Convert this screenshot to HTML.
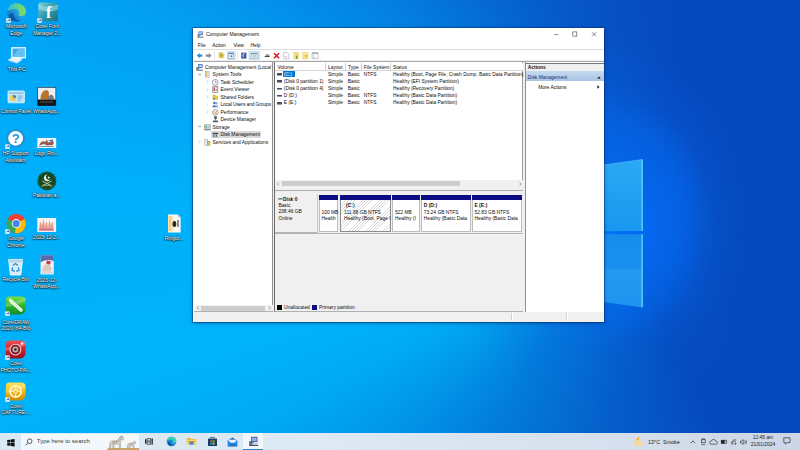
<!DOCTYPE html>
<html><head><meta charset="utf-8"><title>Computer Management</title>
<style>
*{margin:0;padding:0;box-sizing:border-box}
html,body{width:800px;height:450px;overflow:hidden;background:#0566d2}
body{position:relative;font-family:"Liberation Sans",sans-serif;color:#000}
.a,.t,.d,svg{position:absolute}
.t{white-space:nowrap;font-size:4.9px;line-height:7px;height:7px;color:#0c0c0c}
.b{font-weight:bold}
.d{white-space:nowrap;font-size:5px;line-height:7.6px;color:#fff;text-align:center;width:40px;text-shadow:0 0 .8px #000,0 .5px 1.2px rgba(0,0,0,.95),0 0 2px rgba(0,0,0,.65)}
#bg{left:0;top:0;width:800px;height:450px;
 background:conic-gradient(from 0deg at 620px 235px,#064fc2 0deg,#0648be 19deg,#0549bd 90deg,#054bbe 155deg,#0560cb 185deg,#027edc 215deg,#0196e9 230deg,#00a9f3 242deg,#00b3fa 254deg,#00b0fa 274deg,#02a1f4 294deg,#028ce8 306deg,#0479dc 319deg,#0566d2 332deg,#0659c9 346deg,#064fc2 360deg)}
#glow{left:0;top:0;width:800px;height:450px;
 background:radial-gradient(ellipse 90px 120px at 630px 225px,rgba(3,110,255,.8) 0,rgba(3,108,250,.5) 35%,rgba(4,104,240,0) 100%),radial-gradient(ellipse 170px 210px at 600px 215px,rgba(5,104,232,.8) 0,rgba(5,104,232,.6) 47%,rgba(5,100,226,.25) 63%,rgba(6,94,216,.06) 85%,rgba(6,88,205,0) 100%)}
</style></head><body>
<div id="bg" class="a"></div><div id="glow" class="a"></div>

<svg style="left:600px;top:150px" width="60" height="170" viewBox="600 150 60 170">
<defs><linearGradient id="lg1" x1="0" x2="0" y1="0" y2="1"><stop offset="0" stop-color="#2ba9f5"/><stop offset="1" stop-color="#1797ee"/></linearGradient>
<linearGradient id="lg2" x1="0" x2="0" y1="0" y2="1"><stop offset="0" stop-color="#168cec"/><stop offset=".45" stop-color="#1a90ee"/><stop offset=".5" stop-color="#249af1"/><stop offset="1" stop-color="#1f94ef"/></linearGradient></defs>
<polygon points="600,165.600 642.600,159.400 642.600,231 600,231.200" fill="url(#lg1)"/>
<polygon points="600,234 642.600,234.200 642.600,307.400 600,301.600" fill="url(#lg2)"/>
<path d="M600 165.600L642.200 159.500" stroke="#5cc6f8" stroke-width=".7" fill="none" opacity=".8"/>
<path d="M642.100 159.600V231M642.100 234.200V307.200" stroke="#66d2fa" stroke-width="1.300" fill="none"/>
</svg>
<div class="a" style="left:193.30px;top:27.90px;width:410.70px;height:293.90px;background:#fff;box-shadow:0 0 0 .7px rgba(10,50,120,.7),0 1px 4px rgba(0,20,70,.45)"></div>
<div class="t" style="left:205.90px;top:30.70px;font-size:5.05px;color:#111">Computer Management</div>
<svg style="left:197px;top:30.6px" width="7" height="7" viewBox="0 0 14 14"><rect x="3" y="1" width="9" height="7" fill="#3d5fa8"/><rect x="4" y="2" width="7" height="5" fill="#9fc4ee"/><rect x="1" y="7" width="6" height="5" fill="#6f7f96"/><rect x="5" y="9" width="8" height="3" fill="#c9ced6"/><rect x="1" y="12" width="12" height="1.2" fill="#55606e"/></svg>
<svg style="left:550px;top:29px" width="52" height="11" viewBox="550 29 52 11" fill="none" stroke="#333" stroke-width=".55"><path d="M554.2 34.6h4.2"/><rect x="572.8" y="31.9" width="4" height="4.2"/><path d="M592 32.2l4.2 4.2M596.2 32.2l-4.2 4.2"/></svg>
<div class="t" style="left:197.80px;top:41.50px;">File</div>
<div class="t" style="left:212.20px;top:41.50px;">Action</div>
<div class="t" style="left:233.40px;top:41.50px;">View</div>
<div class="t" style="left:250.40px;top:41.50px;">Help</div>
<div class="a" style="left:194.00px;top:49.00px;width:409.50px;height:0.60px;background:#dcdcdc"></div>
<div class="a" style="left:194.00px;top:60.20px;width:409.50px;height:1.00px;background:#f0f0f0"></div>
<div class="a" style="left:194.00px;top:61.20px;width:409.50px;height:0.80px;background:#a6a6a6"></div>
<svg style="left:193px;top:49.6px" width="135" height="11" viewBox="193 49.6 135 11"><path d="M196.8 55.2l2.9-2.7v1.6h2.6v2.2h-2.6v1.6z" fill="#2f8ddb"/><path d="M211.6 55.2l-2.9-2.7v1.6h-2.9v2.2h2.9v1.6z" fill="#8d8d8d"/><rect x="214.3" y="51.2" width=".5" height="8" fill="#c4c4c4"/><rect x="218.6" y="52.6" width="5.6" height="5.2" fill="#e9cf62"/><rect x="219.2" y="51.8" width="3" height="1.4" fill="#d9b94a"/><path d="M221.4 56.8v-2.6l-1 1M221.4 54.2l1 1" stroke="#5a7a2a" stroke-width=".6" fill="none"/><rect x="227.2" y="51" width="7.9" height="8.4" fill="#cfe5f8" stroke="#9cc7ec" stroke-width=".4"/><rect x="228.8" y="52.6" width="4.8" height="5.2" fill="#fff" stroke="#6b7f99" stroke-width=".5"/><rect x="228.8" y="52.6" width="4.8" height="1.2" fill="#6b7f99"/><rect x="230.6" y="55" width="1.6" height="1.6" fill="#2a62c6"/><rect x="237.6" y="51.2" width=".5" height="8" fill="#c4c4c4"/><rect x="241.2" y="52.2" width="5.2" height="6" fill="#3859a8"/><path d="M244.6 53.4h-1.4v1.6h-.8M243.2 55v2.2" stroke="#fff" stroke-width=".7" fill="none"/><rect x="249" y="51" width="10.4" height="8.4" fill="#cfe5f8" stroke="#9cc7ec" stroke-width=".4"/><rect x="251.2" y="52.8" width="6" height="4.8" fill="#fff" stroke="#6b8a99" stroke-width=".5"/><rect x="251.2" y="52.8" width="6" height="1.1" fill="#6b8a99"/><rect x="253.4" y="55" width="2.2" height="1.2" fill="#4f9a8a"/><path d="M264.2 56.4l1.6-1.4h3.8v1.6h-3.4z" fill="#444"/><rect x="266" y="54" width="3" height=".8" fill="#777"/><path d="M274 52.8l5.2 5M279.2 52.8l-5.2 5" stroke="#d2151f" stroke-width="1.5" fill="none"/><path d="M283.6 52h3.6l1.6 1.6v5h-5.2z" fill="#fff" stroke="#8f9aae" stroke-width=".5"/><rect x="284.6" y="55.6" width="2.6" height="1.6" fill="#f1c8cf"/><rect x="293.8" y="52" width="4.8" height="6.6" fill="#f2df7a" stroke="#d8c24f" stroke-width=".3"/><rect x="296" y="55.2" width="1.2" height="3" fill="#6a8f2c"/><rect x="302.6" y="52" width="5.6" height="6.6" fill="#f4e691" stroke="#d8c24f" stroke-width=".3"/><rect x="304.6" y="54.6" width="2.6" height="2.8" fill="#efd25c"/><rect x="305" y="55.2" width="2" height=".5" fill="#a58a2a"/><rect x="312" y="52.4" width="6" height="5.6" fill="#fff" stroke="#7b8794" stroke-width=".5"/><rect x="312" y="52.4" width="6" height="1.1" fill="#9aa6b3"/><rect x="312.8" y="54.4" width="1.6" height="2.8" fill="#cfd6de"/></svg>
<div class="a" style="left:194.30px;top:62.00px;width:78.30px;height:249.60px;background:#fff;border-right:.7px solid #8f8f8f;border-bottom:.6px solid #b0b0b0"></div>
<div class="a" style="left:272.60px;top:62.00px;width:1.40px;height:250.00px;background:#f0f0f0"></div>
<div class="a" style="left:523.30px;top:62.00px;width:1.60px;height:250.00px;background:#f0f0f0"></div>
<div class="a" style="left:274.00px;top:62.00px;width:249.30px;height:249.60px;background:#fff;border-left:.8px solid #6a6a6a;border-right:.7px solid #9a9a9a;border-bottom:.6px solid #b0b0b0"></div>
<div class="a" style="left:524.90px;top:62.00px;width:79.00px;height:250.00px;background:#fff;border-left:.7px solid #8f8f8f"></div>
<div class="a" style="left:193.60px;top:312.20px;width:410.20px;height:9.40px;background:#f0f0f0"></div>
<div class="a" style="left:511.00px;top:313.40px;width:0.60px;height:7.00px;background:#d2d2d2"></div>
<div class="a" style="left:512.00px;top:313.40px;width:0.50px;height:7.00px;background:#fff"></div>
<div class="a" style="left:566.40px;top:313.40px;width:0.60px;height:7.00px;background:#d2d2d2"></div>
<div class="a" style="left:567.40px;top:313.40px;width:0.50px;height:7.00px;background:#fff"></div>
<svg style="left:196.3px;top:63.60px" width="7" height="7" viewBox="0 0 7 7"><rect x="2" y="0" width="4.6" height="3.8" fill="#3d5fa8"/><rect x="2.6" y=".6" width="3.4" height="2.6" fill="#a8caf0"/><rect x=".3" y="3" width="3.2" height="3" fill="#6f7f96"/><rect x="2.4" y="4.6" width="4.4" height="1.6" fill="#c9ced6"/><rect x=".3" y="6" width="6.6" height=".7" fill="#55606e"/></svg>
<div class="t" style="left:205.00px;top:63.50px;">Computer Management (Local</div>
<svg style="left:204.2px;top:71.10px" width="7" height="7" viewBox="0 0 7 7"><rect x="1.2" y=".4" width="1.5" height="6" fill="#e6d47a" stroke="#9a8f52" stroke-width=".3"/><rect x="3.8" y=".4" width="1.5" height="6" fill="#d9dde2" stroke="#8a8f96" stroke-width=".3"/></svg>
<div class="t" style="left:212.50px;top:71.00px;">System Tools</div>
<svg style="left:197.6px;top:72.90px" width="3.4" height="3" viewBox="0 0 3.4 3"><path d="M.4 .7l1.3 1.4 1.3-1.4" fill="none" stroke="#444" stroke-width=".6"/></svg>
<svg style="left:212.2px;top:78.60px" width="7" height="7" viewBox="0 0 7 7"><circle cx="3.3" cy="3.4" r="2.9" fill="#fff" stroke="#6a7686" stroke-width=".7"/><path d="M3.3 1.6v1.9h1.5" stroke="#444" stroke-width=".5" fill="none"/></svg>
<div class="t" style="left:220.50px;top:78.50px;">Task Scheduler</div>
<svg style="left:205.6px;top:80.20px" width="3" height="3.6" viewBox="0 0 3 3.6"><path d="M.8 .4l1.3 1.4-1.3 1.4" fill="none" stroke="#a6a6a6" stroke-width=".5"/></svg>
<svg style="left:212.2px;top:86.10px" width="7" height="7" viewBox="0 0 7 7"><rect x=".8" y=".5" width="5" height="5.8" fill="#fff" stroke="#5b6470" stroke-width=".6"/><rect x="1.6" y="1.4" width="1.4" height="3.8" fill="#c44"/><rect x="3.5" y="1.6" width="1.6" height=".6" fill="#666"/><rect x="3.5" y="3" width="1.6" height=".6" fill="#666"/><rect x="3.5" y="4.4" width="1.6" height=".6" fill="#666"/></svg>
<div class="t" style="left:220.50px;top:86.00px;">Event Viewer</div>
<svg style="left:205.6px;top:87.70px" width="3" height="3.6" viewBox="0 0 3 3.6"><path d="M.8 .4l1.3 1.4-1.3 1.4" fill="none" stroke="#a6a6a6" stroke-width=".5"/></svg>
<svg style="left:212.2px;top:93.60px" width="7" height="7" viewBox="0 0 7 7"><rect x=".6" y="1.6" width="5.6" height="4.2" fill="#e8c84e"/><rect x=".6" y=".9" width="2.6" height="1.2" fill="#d4b13c"/><circle cx="2" cy="4.8" r="1" fill="#5c86c9"/></svg>
<div class="t" style="left:220.50px;top:93.50px;">Shared Folders</div>
<svg style="left:205.6px;top:95.20px" width="3" height="3.6" viewBox="0 0 3 3.6"><path d="M.8 .4l1.3 1.4-1.3 1.4" fill="none" stroke="#a6a6a6" stroke-width=".5"/></svg>
<svg style="left:212.2px;top:101.10px" width="7" height="7" viewBox="0 0 7 7"><circle cx="2.4" cy="2" r="1.3" fill="#4b6fb5"/><path d="M.4 6.2c0-2.6 4-2.6 4 0z" fill="#4b6fb5"/><circle cx="4.6" cy="2.4" r="1.1" fill="#8aa2cf"/><path d="M3 6.2c0-2.2 3.4-2.2 3.4 0z" fill="#8aa2cf"/></svg>
<div class="t" style="left:220.50px;top:101.00px;letter-spacing:-.1px">Local Users and Groups</div>
<svg style="left:205.6px;top:102.70px" width="3" height="3.6" viewBox="0 0 3 3.6"><path d="M.8 .4l1.3 1.4-1.3 1.4" fill="none" stroke="#a6a6a6" stroke-width=".5"/></svg>
<svg style="left:212.2px;top:108.60px" width="7" height="7" viewBox="0 0 7 7"><circle cx="3.3" cy="3.4" r="2.9" fill="#f4f4f4" stroke="#7a8088" stroke-width=".6"/><path d="M1.2 3.6l1.2-1.2 1.2 1.6 1.6-2" stroke="#c33" stroke-width=".5" fill="none"/><rect x="1.4" y="4.6" width="3.8" height=".8" fill="#d8b13a"/></svg>
<div class="t" style="left:220.50px;top:108.50px;">Performance</div>
<svg style="left:205.6px;top:110.20px" width="3" height="3.6" viewBox="0 0 3 3.6"><path d="M.8 .4l1.3 1.4-1.3 1.4" fill="none" stroke="#a6a6a6" stroke-width=".5"/></svg>
<svg style="left:212.2px;top:116.10px" width="7" height="7" viewBox="0 0 7 7"><rect x="2.2" y=".4" width="2.6" height="2.4" fill="#39434f"/><rect x="2.8" y="3.4" width="1.4" height="1" fill="#39434f"/><rect x=".8" y="4.6" width="5.4" height="1.6" fill="#4d5a68"/></svg>
<div class="t" style="left:220.50px;top:116.00px;">Device Manager</div>
<svg style="left:204.2px;top:123.60px" width="7" height="7" viewBox="0 0 7 7"><rect x=".4" y=".8" width="6" height="4.4" fill="#dfe9e2" stroke="#6d8a78" stroke-width=".5"/><rect x="1.2" y="1.6" width="2" height="2.8" fill="#7fae8c"/><rect x="3.8" y="1.6" width="1.8" height="2.8" fill="#a9c4d8"/><rect x=".4" y="5.4" width="6" height=".9" fill="#59687a"/></svg>
<div class="t" style="left:212.50px;top:123.50px;">Storage</div>
<svg style="left:197.6px;top:125.40px" width="3.4" height="3" viewBox="0 0 3.4 3"><path d="M.4 .7l1.3 1.4 1.3-1.4" fill="none" stroke="#444" stroke-width=".6"/></svg>
<div class="a" style="left:211.20px;top:131.40px;width:50.20px;height:6.20px;background:#d9d9d9"></div>
<svg style="left:212.2px;top:131.10px" width="7" height="7" viewBox="0 0 7 7"><rect x=".6" y="1.8" width="5.6" height="1.4" fill="#3c4856"/><rect x="1.4" y="3.6" width="1" height="2.2" fill="#3c4856"/><rect x="3.8" y="3.6" width="1" height="2.2" fill="#3c4856"/><rect x=".6" y="5.6" width="5.4" height=".6" fill="#7a8694"/></svg>
<div class="t" style="left:220.50px;top:131.00px;">Disk Management</div>
<svg style="left:204.2px;top:138.60px" width="7" height="7" viewBox="0 0 7 7"><rect x=".8" y=".6" width="2.6" height="5.6" fill="#e9ecef" stroke="#767f8a" stroke-width=".4"/><rect x="3.2" y="2.2" width="2.8" height="4" fill="#d8c56a" stroke="#8a7f4a" stroke-width=".4"/></svg>
<div class="t" style="left:212.50px;top:138.50px;">Services and Applications</div>
<svg style="left:198.2px;top:140.20px" width="3" height="3.6" viewBox="0 0 3 3.6"><path d="M.8 .4l1.3 1.4-1.3 1.4" fill="none" stroke="#a6a6a6" stroke-width=".5"/></svg>
<div class="a" style="left:194.60px;top:304.80px;width:78.00px;height:6.60px;background:#f0f0f0"></div>
<div class="a" style="left:200.50px;top:305.60px;width:64.50px;height:5.00px;background:#cdcdcd"></div>
<svg style="left:195.5px;top:306.4px" width="76" height="4" viewBox="0 0 76 4" fill="none" stroke="#555" stroke-width=".55"><path d="M2.6 .5l-1.4 1.5 1.4 1.5"/><path d="M73 .5l1.4 1.5-1.4 1.5"/></svg>
<div class="a" style="left:274.80px;top:62.60px;width:248.40px;height:8.20px;background:#fff;border-bottom:.6px solid #d5d5d5"></div>
<div class="a" style="left:325.40px;top:63.00px;width:0.60px;height:7.40px;background:#cfcfcf"></div>
<div class="a" style="left:344.50px;top:63.00px;width:0.60px;height:7.40px;background:#cfcfcf"></div>
<div class="a" style="left:361.10px;top:63.00px;width:0.60px;height:7.40px;background:#cfcfcf"></div>
<div class="a" style="left:390.20px;top:63.00px;width:0.60px;height:7.40px;background:#cfcfcf"></div>
<div class="t" style="left:277.40px;top:63.50px;">Volume</div>
<div class="t" style="left:328.00px;top:63.50px;">Layout</div>
<div class="t" style="left:348.00px;top:63.50px;">Type</div>
<div class="t" style="left:363.80px;top:63.50px;">File System</div>
<div class="t" style="left:393.00px;top:63.50px;">Status</div>
<div class="a" style="left:277.00px;top:73.20px;width:4.80px;height:1.70px;background:#4a4f57;border-radius:.3px"></div>
<div class="a" style="left:277.00px;top:74.90px;width:4.80px;height:0.50px;background:#9aa0a8"></div>
<div class="a" style="left:282.90px;top:71.30px;width:12.00px;height:6.00px;background:#0078d7"></div>
<div class="t" style="left:283.80px;top:70.80px;color:#fff">(C:)</div>
<div class="t" style="left:328.00px;top:70.80px;">Simple</div>
<div class="t" style="left:347.80px;top:70.80px;">Basic</div>
<div class="t" style="left:363.80px;top:70.80px;">NTFS</div>
<div class="t" style="left:393.00px;top:70.80px;">Healthy (Boot, Page File, Crash Dump, Basic Data Partition)</div>
<div class="a" style="left:277.00px;top:80.37px;width:4.80px;height:1.70px;background:#4a4f57;border-radius:.3px"></div>
<div class="a" style="left:277.00px;top:82.07px;width:4.80px;height:0.50px;background:#9aa0a8"></div>
<div class="t" style="left:283.80px;top:77.97px;">(Disk 0 partition 1)</div>
<div class="t" style="left:328.00px;top:77.97px;">Simple</div>
<div class="t" style="left:347.80px;top:77.97px;">Basic</div>
<div class="t" style="left:363.80px;top:77.97px;"></div>
<div class="t" style="left:393.00px;top:77.97px;">Healthy (EFI System Partition)</div>
<div class="a" style="left:277.00px;top:87.54px;width:4.80px;height:1.70px;background:#4a4f57;border-radius:.3px"></div>
<div class="a" style="left:277.00px;top:89.24px;width:4.80px;height:0.50px;background:#9aa0a8"></div>
<div class="t" style="left:283.80px;top:85.14px;">(Disk 0 partition 4)</div>
<div class="t" style="left:328.00px;top:85.14px;">Simple</div>
<div class="t" style="left:347.80px;top:85.14px;">Basic</div>
<div class="t" style="left:363.80px;top:85.14px;"></div>
<div class="t" style="left:393.00px;top:85.14px;">Healthy (Recovery Partition)</div>
<div class="a" style="left:277.00px;top:94.71px;width:4.80px;height:1.70px;background:#4a4f57;border-radius:.3px"></div>
<div class="a" style="left:277.00px;top:96.41px;width:4.80px;height:0.50px;background:#9aa0a8"></div>
<div class="t" style="left:283.80px;top:92.31px;">D (D:)</div>
<div class="t" style="left:328.00px;top:92.31px;">Simple</div>
<div class="t" style="left:347.80px;top:92.31px;">Basic</div>
<div class="t" style="left:363.80px;top:92.31px;">NTFS</div>
<div class="t" style="left:393.00px;top:92.31px;">Healthy (Basic Data Partition)</div>
<div class="a" style="left:277.00px;top:101.88px;width:4.80px;height:1.70px;background:#4a4f57;border-radius:.3px"></div>
<div class="a" style="left:277.00px;top:103.58px;width:4.80px;height:0.50px;background:#9aa0a8"></div>
<div class="t" style="left:283.80px;top:99.48px;">E (E:)</div>
<div class="t" style="left:328.00px;top:99.48px;">Simple</div>
<div class="t" style="left:347.80px;top:99.48px;">Basic</div>
<div class="t" style="left:363.80px;top:99.48px;">NTFS</div>
<div class="t" style="left:393.00px;top:99.48px;">Healthy (Basic Data Partition)</div>
<div class="a" style="left:274.90px;top:180.40px;width:248.30px;height:6.60px;background:#f0f0f0"></div>
<div class="a" style="left:281.60px;top:181.20px;width:178.00px;height:5.00px;background:#cdcdcd"></div>
<svg style="left:275.6px;top:181.8px" width="247" height="4" viewBox="0 0 247 4" fill="none" stroke="#555" stroke-width=".55"><path d="M2.8 .5l-1.4 1.5 1.4 1.5"/><path d="M243.6 .5l1.4 1.5-1.4 1.5"/></svg>
<div class="a" style="left:274.80px;top:187.00px;width:248.50px;height:3.20px;background:#f0f0f0"></div>
<div class="a" style="left:274.80px;top:190.20px;width:248.50px;height:0.70px;background:#adadad"></div>
<div class="a" style="left:274.80px;top:190.90px;width:248.50px;height:120.60px;background:#f0f0f0"></div>
<div class="a" style="left:275.20px;top:194.40px;width:42.80px;height:38.40px;background:#f0f0f0;border-bottom:.6px solid #b4b4b4;border-right:.6px solid #c8c8c8"></div>
<div class="a" style="left:275.20px;top:232.60px;width:247.60px;height:0.60px;background:#b4b4b4"></div>
<svg style="left:277.8px;top:198.4px" width="5" height="2" viewBox="0 0 5 2"><rect x=".2" y=".4" width="4.4" height="1" fill="#3a3f47"/></svg>
<div class="t" style="left:283.00px;top:195.70px;font-weight:bold;color:#111">Disk 0</div>
<div class="t" style="left:278.40px;top:201.90px;">Basic</div>
<div class="t" style="left:278.40px;top:208.20px;">238.46 GB</div>
<div class="t" style="left:278.40px;top:214.50px;">Online</div>
<div class="a" style="left:318.90px;top:195.20px;width:19.50px;height:5.20px;background:#0c0c84"></div>
<div class="a" style="left:318.90px;top:200.40px;width:19.50px;height:31.20px;background:#fff;border:.5px solid #bdbdbd;border-top:none"></div>
<div class="t" style="left:321.50px;top:208.80px;">100 MB</div>
<div class="t" style="left:321.50px;top:215.10px;">Health</div>
<div class="a" style="left:339.70px;top:195.20px;width:51.40px;height:5.20px;background:#0c0c84"></div>
<div class="a" style="left:339.70px;top:200.40px;width:51.40px;height:31.20px;background:repeating-linear-gradient(135deg,#fff 0,#fff 1.5px,#d6d6d6 1.5px,#d6d6d6 2px);border:.7px solid #8c8c8c;border-top:none"></div>
<div class="t" style="left:346.10px;top:202.40px;font-weight:bold;color:#111">(C:)</div>
<div class="t" style="left:344.10px;top:208.80px;">111.68 GB NTFS</div>
<div class="t" style="left:344.10px;top:215.10px;">Healthy (Boot, Page I</div>
<div class="a" style="left:392.30px;top:195.20px;width:27.70px;height:5.20px;background:#0c0c84"></div>
<div class="a" style="left:392.30px;top:200.40px;width:27.70px;height:31.20px;background:#fff;border:.5px solid #bdbdbd;border-top:none"></div>
<div class="t" style="left:394.90px;top:208.80px;">522 MB</div>
<div class="t" style="left:394.90px;top:215.10px;">Healthy (I</div>
<div class="a" style="left:421.20px;top:195.20px;width:49.50px;height:5.20px;background:#0c0c84"></div>
<div class="a" style="left:421.20px;top:200.40px;width:49.50px;height:31.20px;background:#fff;border:.5px solid #bdbdbd;border-top:none"></div>
<div class="t" style="left:423.80px;top:202.40px;font-weight:bold;color:#111">D  (D:)</div>
<div class="t" style="left:423.80px;top:208.80px;">73.24 GB NTFS</div>
<div class="t" style="left:423.80px;top:215.10px;">Healthy (Basic Data</div>
<div class="a" style="left:471.90px;top:195.20px;width:49.70px;height:5.20px;background:#0c0c84"></div>
<div class="a" style="left:471.90px;top:200.40px;width:49.70px;height:31.20px;background:#fff;border:.5px solid #bdbdbd;border-top:none"></div>
<div class="t" style="left:474.50px;top:202.40px;font-weight:bold;color:#111">E  (E:)</div>
<div class="t" style="left:474.50px;top:208.80px;">52.83 GB NTFS</div>
<div class="t" style="left:474.50px;top:215.10px;">Healthy (Basic Data</div>
<div class="a" style="left:277.20px;top:304.60px;width:4.70px;height:5.20px;background:#000"></div>
<div class="t" style="left:284.00px;top:304.10px;">Unallocated</div>
<div class="a" style="left:312.20px;top:304.60px;width:5.00px;height:5.20px;background:#0c0c84"></div>
<div class="t" style="left:319.00px;top:304.10px;">Primary partition</div>
<div class="a" style="left:525.60px;top:62.60px;width:78.30px;height:8.60px;background:#f0f0f0;border-top:.5px solid #777"></div>
<div class="t" style="left:527.80px;top:63.90px;font-weight:bold;color:#111">Actions</div>
<div class="a" style="left:525.60px;top:71.20px;width:78.30px;height:10.00px;background:linear-gradient(#c6daf0,#a9c3e2)"></div>
<div class="t" style="left:527.80px;top:73.80px;color:#1c2f7a">Disk Management</div>
<svg style="left:596.6px;top:76px" width="4" height="3" viewBox="0 0 4 3"><path d="M.3 2.6L2 .5l1.7 2.1z" fill="#111"/></svg>
<div class="t" style="left:538.20px;top:83.70px;">More Actions</div>
<svg style="left:597.2px;top:85.4px" width="3" height="4" viewBox="0 0 3 4"><path d="M.4 .3l2.1 1.7L.4 3.7z" fill="#111"/></svg>
<svg style="left:5px;top:1px" width="24" height="24" viewBox="0 0 24 24"><defs>
<linearGradient id="e1" x1="0" y1="1" x2="1" y2="0"><stop offset="0" stop-color="#0b53a8"/><stop offset=".5" stop-color="#1b9de2"/><stop offset="1" stop-color="#4ad0c6"/></linearGradient>
<linearGradient id="e2" x1="0" y1="0" x2="1" y2="0"><stop offset="0" stop-color="#2fc0d8"/><stop offset="1" stop-color="#86dc54"/></linearGradient></defs>
<circle cx="11.5" cy="11.6" r="9.4" fill="url(#e1)"/>
<path d="M2.4 9.6C3.4 4.6 7.4 2.2 11.6 2.2c5.2 0 9.3 3.6 9.3 8.4 0 3-2.2 4.6-4.6 4.6-2 0-3-.9-3-1.6 0-.6 .8-.9 .8-2.2 0-1.800-1.800-3.400-4.400-3.400-3 0-5.800 2-7.300 1.600z" fill="url(#e2)"/>
<path d="M8.6 12.400c-.6 3.400 2 7 6.400 7.400-4.800 2-9.800-1-10.600-5.600 .8-1.600 2.400-2.400 4.200-1.800z" fill="#0a4a9c" opacity=".75"/>
<rect x="1.2" y="17.4" width="4.4" height="4.4" fill="#fff" stroke="#9aa" stroke-width=".2"/><path d="M2.2 21.0c0-1.6 .8-2.2 2-2.2v-.8l1.2 1.3-1.2 1.3v-.8c-.9 0-1.5 .3-2 1.2z" fill="#1d5fc0"/></svg>
<div class="d" style="left:-3.8px;top:23.2px">Microsoft</div>
<div class="d" style="left:-3.8px;top:30.4px">Edge</div>
<svg style="left:36px;top:1px" width="24" height="24" viewBox="0 0 24 24"><defs><linearGradient id="cf" x1="0" y1="0" x2="1" y2="1"><stop offset="0" stop-color="#7fd0d8"/><stop offset=".5" stop-color="#2f9aa8"/><stop offset="1" stop-color="#1c6f80"/></linearGradient></defs>
<rect x="2.4" y="1.6" width="19.6" height="18.6" rx="1.6" fill="url(#cf)"/><path d="M2.4 3.200c6 3 12 3 19.600 .4v5c-7 3-13 2-19.600 0z" fill="#bfeaf0" opacity=".45"/>
<text x="12.6" y="17" font-family="Liberation Serif,serif" font-weight="bold" font-size="16" fill="#fff" text-anchor="middle">f</text>
<rect x="1.2" y="17.4" width="4.4" height="4.4" fill="#fff" stroke="#9aa" stroke-width=".2"/><path d="M2.2 21.0c0-1.6 .8-2.2 2-2.2v-.8l1.2 1.3-1.2 1.3v-.8c-.9 0-1.5 .3-2 1.2z" fill="#1d5fc0"/></svg>
<div class="d" style="left:27.2px;top:23.2px">Corel Font</div>
<div class="d" style="left:27.2px;top:30.4px">Manager 2...</div>
<svg style="left:5px;top:44px" width="24" height="24" viewBox="0 0 24 24">
<rect x="6.600" y="3.600" width="14" height="10.400" fill="#dff2fc" stroke="#e9f7ff" stroke-width=".8"/><rect x="7.600" y="4.600" width="12" height="8.400" fill="#3aa7e8"/><path d="M7.600 13l6-8.400h6v8.400z" fill="#62c1f2"/>
<path d="M3.400 15.800l5.600-2.600 8 1.600-5 3.600z" fill="#e6f3fb" stroke="#fff" stroke-width=".5"/><path d="M3.400 15.800l8.600 2.600v1.200l-8.600-2.800z" fill="#b9d9ee"/><path d="M12 18.400l5-3.600v1.200l-5 3.600z" fill="#d3e8f5"/></svg>
<div class="d" style="left:-3.4px;top:66.2px">This PC</div>
<svg style="left:5px;top:86px" width="24" height="22" viewBox="0 0 24 22">
<rect x="3" y="5" width="16.400" height="11.800" rx=".8" fill="#bfe4f8" stroke="#e4f4fd" stroke-width=".8"/><rect x="4" y="6" width="14.400" height="2" fill="#8fcaf0"/>
<circle cx="8.200" cy="11.800" r="3" fill="#f2c84a"/><path d="M8.200 11.800v-3a3 3 0 0 1 3 3z" fill="#3b7fd0"/>
<rect x="12.600" y="9.600" width="4.800" height="1" fill="#6aaee0"/><rect x="12.600" y="11.600" width="4.800" height="1" fill="#6aaee0"/><rect x="12.600" y="13.600" width="3.400" height="1" fill="#6aaee0"/></svg>
<div class="d" style="left:-4.0px;top:107.6px">Control Panel</div>
<svg style="left:36px;top:86px" width="22" height="22" viewBox="0 0 22 22">
<rect x="1.300" y="1.100" width="18.800" height="18.800" fill="#1b2430"/><rect x="1.900" y="1.700" width="17.600" height="12" fill="#e9eef2"/>
<path d="M4.500 13.700c0-5 2-9 5.600-9.600 2.600 0 3.400 3 2.600 5.600l1.600 4z" fill="#b9742a"/><path d="M11.500 13.700c.4-3 1.800-5 3.800-5 1.800 0 2.800 2.400 2.600 5z" fill="#6f7b88"/>
<rect x="1.900" y="13.700" width="17.600" height="5.600" fill="#121820"/><rect x="4" y="15.400" width="13" height="1.200" fill="#5a4a3a"/></svg>
<div class="d" style="left:26.6px;top:107.6px">WhatsApp...</div>
<svg style="left:4px;top:127px" width="24" height="24" viewBox="0 0 24 24">
<circle cx="11.600" cy="11.400" r="9.700" fill="#1a96d8"/><circle cx="11.600" cy="11.400" r="7.300" fill="#fff"/>
<text x="11.700" y="16" font-family="Liberation Sans,sans-serif" font-weight="bold" font-size="13" fill="#1a96d8" text-anchor="middle">?</text>
<rect x="1.2" y="17.4" width="4.4" height="4.4" fill="#fff" stroke="#9aa" stroke-width=".2"/><path d="M2.2 21.0c0-1.6 .8-2.2 2-2.2v-.8l1.2 1.3-1.2 1.3v-.8c-.9 0-1.5 .3-2 1.2z" fill="#1d5fc0"/></svg>
<div class="d" style="left:-4.4px;top:149.8px">HP Support</div>
<div class="d" style="left:-4.4px;top:156.8px">Assistant</div>
<svg style="left:36px;top:136px" width="22" height="14" viewBox="0 0 22 14">
<rect x="1.400" y="2" width="18.800" height="10" fill="#f4f6f8"/><path d="M3 9.500c2-4 4-5 6-3.500l2-2.500 1 3c2-1 4-1 6-.5l-1 3-6 .5-3-1.500z" fill="#9a5a4a"/><path d="M12 4.500l5-1v2.500z" fill="#3a6ab0"/><rect x="3" y="10.200" width="15" height=".8" fill="#5a7aa8"/></svg>
<div class="d" style="left:26.6px;top:150.2px">Logo Rin...</div>
<svg style="left:36px;top:170px" width="22" height="22" viewBox="0 0 22 22">
<circle cx="10.900" cy="10.900" r="9.500" fill="#134a2a"/><circle cx="10.900" cy="10.900" r="8.600" fill="none" stroke="#2a6a40" stroke-width=".6"/>
<path d="M11.600 4.400a3.400 3.400 0 1 0 2.600 5.200 2.700 2.700 0 1 1-2.600-5.200z" fill="#f1f1e6"/><path d="M12.800 6l.4 1 1 .1-.8.700 .3 1-.9-.6-.9.600 .3-1-.8-.7 1-.1z" fill="#f1f1e6"/>
<path d="M5.600 16.400l10-5.400M16.200 16.400l-10-5.400" stroke="#d8d29a" stroke-width=".9" fill="none"/><path d="M7.400 14.600c2 1.400 5 1.400 7 0" stroke="#d8d29a" stroke-width=".6" fill="none"/></svg>
<div class="d" style="left:26.6px;top:192.0px">Pakistan a...</div>
<svg style="left:4px;top:212px" width="24" height="24" viewBox="0 0 24 24">
<circle cx="12.200" cy="11.600" r="9.600" fill="#ea4335"/>
<path d="M12.200 11.600L3.900 6.800A9.600 9.600 0 0 0 11 21.100z" fill="#34a853"/><path d="M12.200 11.600L11 21.100A9.600 9.600 0 0 0 20.500 6.800z" fill="#fbbc05"/>
<path d="M12.200 11.600L3.900 6.800A9.600 9.600 0 0 1 20.500 6.800z" fill="#ea4335"/>
<circle cx="12.200" cy="11.600" r="4.500" fill="#fff"/><circle cx="12.200" cy="11.600" r="3.600" fill="#4285f4"/>
<rect x="1.2" y="17.4" width="4.4" height="4.4" fill="#fff" stroke="#9aa" stroke-width=".2"/><path d="M2.2 21.0c0-1.6 .8-2.2 2-2.2v-.8l1.2 1.3-1.2 1.3v-.8c-.9 0-1.5 .3-2 1.2z" fill="#1d5fc0"/></svg>
<div class="d" style="left:-4.0px;top:234.8px">Google</div>
<div class="d" style="left:-4.0px;top:241.6px">Chrome</div>
<svg style="left:36px;top:216px" width="22" height="18" viewBox="0 0 22 18">
<rect x="1.300" y="2" width="18.800" height="14" fill="#f7f1f3"/><path d="M3 14l1.500-9 1.500 6 1.500-8 1.500 9 1.500-7 1.500 8 1.500-9 1.500 7 1.500-6 1 9z" fill="#d8607a" opacity=".75"/><path d="M3 8h15M3 11h15" stroke="#e9c05a" stroke-width=".8"/><rect x="3" y="13.600" width="15" height="1.200" fill="#c24a60" opacity=".7"/></svg>
<div class="d" style="left:26.6px;top:234.0px">2023-12-2...</div>
<svg style="left:4px;top:255px" width="24" height="24" viewBox="0 0 24 24">
<path d="M4.600 4.400h14l-1.800 15.600h-10.400z" fill="#dcecf6" stroke="#f4fbff" stroke-width=".8"/><path d="M4.600 4.400h14l-.4 3h-13.200z" fill="#b8d4e6"/>
<path d="M9 10.400l2.400-1.800 2.400 1.800M14.400 12.400l.6 3-2.800 1M8.600 12.400l-.6 3 2.800 1" fill="none" stroke="#2b8de0" stroke-width="1.300"/></svg>
<div class="d" style="left:-4.4px;top:276.4px">Recycle Bin</div>
<svg style="left:38px;top:254px" width="18" height="22" viewBox="0 0 18 22">
<rect x="2.600" y="1.300" width="13.200" height="19" fill="#eef0f4"/><path d="M2.600 1.300h13.200v6c-4-2-8-2-13.200 1z" fill="#5a6aa8"/><path d="M4 16c1-5 4-7 7-6l3 4-2 5h-7z" fill="#e4c8c0"/><path d="M9 6.500l4 1-1 3-4-1z" fill="#c23a4a"/><rect x="2.600" y="17.300" width="13.200" height="3" fill="#d8dce4"/></svg>
<div class="d" style="left:26.8px;top:277.0px">2023-12-</div>
<div class="d" style="left:26.8px;top:283.0px">WhatsApp...</div>
<svg style="left:4px;top:294px" width="24" height="24" viewBox="0 0 24 24"><defs><linearGradient id="cg" x1="0" y1="0" x2="0" y2="1"><stop offset="0" stop-color="#7be04a"/><stop offset=".5" stop-color="#2fb52e"/><stop offset="1" stop-color="#148a2a"/></linearGradient></defs>
<path d="M5.400 2.400h11.800c2.600 0 4.400 1.800 4.400 4.400v7.600c0 3.600-2.800 6.200-6.400 6.200h-9.800c-2.400 0-3.600-1.200-3.600-3.600v-10.600c0-2.600 1.200-4 3.600-4z" fill="url(#cg)"/>
<path d="M1.800 9.600c6-1 13-3 19.800-6.600v4c-6 3.400-13 5.400-19.800 6z" fill="#fff" opacity=".22"/><path d="M6.400 6.400l10.600 9.600" stroke="#f4fff0" stroke-width="3.400" stroke-linecap="round"/><path d="M6.400 6.400l10.600 9.600" stroke="#cfeec6" stroke-width="1.200" stroke-linecap="round"/><rect x="1.2" y="17.4" width="4.4" height="4.4" fill="#fff" stroke="#9aa" stroke-width=".2"/><path d="M2.2 21.0c0-1.6 .8-2.2 2-2.2v-.8l1.2 1.3-1.2 1.3v-.8c-.9 0-1.5 .3-2 1.2z" fill="#1d5fc0"/></svg>
<div class="d" style="left:-4.0px;top:318.6px">CorelDRAW</div>
<div class="d" style="left:-4.0px;top:325.0px">2020 (64-Bit)</div>
<svg style="left:4px;top:338px" width="24" height="24" viewBox="0 0 24 24"><defs><linearGradient id="cr" x1="0" y1="0" x2="0" y2="1"><stop offset="0" stop-color="#f0505a"/><stop offset=".5" stop-color="#cf2030"/><stop offset="1" stop-color="#9c1020"/></linearGradient></defs>
<path d="M5.400 2.400h11.800c2.600 0 4.400 1.800 4.400 4.400v7.600c0 3.600-2.800 6.200-6.400 6.200h-9.800c-2.400 0-3.600-1.200-3.600-3.600v-10.600c0-2.600 1.200-4 3.600-4z" fill="url(#cr)"/>
<path d="M1.800 9.600c6-1 13-3 19.800-6.600v4c-6 3.400-13 5.400-19.800 6z" fill="#fff" opacity=".22"/><circle cx="11.400" cy="11.600" r="5.400" fill="#7a1a22" stroke="#f4c8cc" stroke-width="1.100"/><circle cx="11.400" cy="11.600" r="3" fill="#b8b0b0"/><circle cx="11.400" cy="11.600" r="1.300" fill="#40282a"/><circle cx="18" cy="5.400" r="1.300" fill="#fbe4e6"/><rect x="1.2" y="17.4" width="4.4" height="4.4" fill="#fff" stroke="#9aa" stroke-width=".2"/><path d="M2.2 21.0c0-1.6 .8-2.2 2-2.2v-.8l1.2 1.3-1.2 1.3v-.8c-.9 0-1.5 .3-2 1.2z" fill="#1d5fc0"/></svg>
<div class="d" style="left:-4.0px;top:360.4px">Corel</div>
<div class="d" style="left:-4.0px;top:367.0px">PHOTO-PAI...</div>
<svg style="left:4px;top:380px" width="24" height="24" viewBox="0 0 24 24"><defs><linearGradient id="cy" x1="0" y1="0" x2="0" y2="1"><stop offset="0" stop-color="#ffe45a"/><stop offset=".5" stop-color="#f0b810"/><stop offset="1" stop-color="#c88a08"/></linearGradient></defs>
<path d="M5.400 2.400h11.800c2.600 0 4.400 1.800 4.400 4.400v7.600c0 3.600-2.800 6.200-6.400 6.200h-9.800c-2.400 0-3.600-1.200-3.600-3.600v-10.600c0-2.600 1.200-4 3.600-4z" fill="url(#cy)"/>
<path d="M1.800 9.600c6-1 13-3 19.800-6.600v4c-6 3.400-13 5.400-19.800 6z" fill="#fff" opacity=".22"/><circle cx="11.600" cy="11.400" r="5.600" fill="none" stroke="#fff6d0" stroke-width="1.700"/><circle cx="11.600" cy="11.400" r="1.800" fill="none" stroke="#fff6d0" stroke-width="1.100"/><path d="M11.600 5v3.600M11.600 14.200v3.600M5.200 11.400h3.600M14.400 11.400h3.600" stroke="#fff6d0" stroke-width="1.100"/><rect x="1.2" y="17.4" width="4.4" height="4.4" fill="#fff" stroke="#9aa" stroke-width=".2"/><path d="M2.2 21.0c0-1.6 .8-2.2 2-2.2v-.8l1.2 1.3-1.2 1.3v-.8c-.9 0-1.5 .3-2 1.2z" fill="#1d5fc0"/></svg>
<div class="d" style="left:-4.0px;top:402.8px">Corel</div>
<div class="d" style="left:-4.0px;top:409.0px">CAPTURE ...</div>
<svg style="left:166px;top:213px" width="16" height="21" viewBox="0 0 16 21">
<path d="M2 1.600h9.800l2.800 2.800v15h-12.600z" fill="#fbfbf6"/><path d="M11.800 1.600v2.800h2.800z" fill="#c9ccd0"/><defs><linearGradient id="rg" x1="0" x2="1" y1="0" y2="0"><stop offset="0" stop-color="#f4c466"/><stop offset="1" stop-color="#fbf3dc"/></linearGradient></defs><path d="M2.600 3h5.400v15.400h-5.400z" fill="url(#rg)"/>
<ellipse cx="8.400" cy="11" rx="1.900" ry="3" fill="#2a2620"/><rect x="11.400" y="7" width="1.200" height="7" fill="#4a4238"/></svg>
<div class="d" style="left:154.0px;top:234.8px">Ringto...</div>
<div class="a" style="left:0;top:432.9px;width:800px;height:17.2px;background:linear-gradient(to right,#d9e8f5 0,#dde9f4 40%,#d6e0ee 75%,#ccd6e6 100%)"></div>
<svg style="left:6.6px;top:438.6px" width="8" height="8" viewBox="0 0 8 8" fill="#101010"><path d="M.2 1.100l3.100-.45v2.900h-3.100zM3.700 .6l3.900-.55v3.500h-3.900zM.2 3.950h3.100v2.900l-3.100-.45zM3.700 3.950h3.900v3.500l-3.900-.55z"/></svg>
<div class="a" style="left:20.7px;top:433.6px;width:118.7px;height:16.4px;background:#f3f8fc"></div>
<svg style="left:25px;top:438px" width="8" height="8" viewBox="0 0 8 8" fill="none" stroke="#222" stroke-width=".7"><circle cx="4.700" cy="3.200" r="2.300"/><path d="M3 4.900l-2.400 2.500"/></svg>
<div class="t" style="left:36.8px;top:438.400px;font-size:6px;color:#3a3a3a">Type here to search</div>
<svg style="left:106px;top:433.600px" width="33.400" height="16.400" viewBox="106 433.600 33.400 16.400">
<path d="M106.600 450c.4-1.600 1.600-2.300 3.400-2.300h29.400v2.300z" fill="#c8a468"/>
<path d="M109.400 447.800l.3-4.600c.2-1.700 1.200-2.600 2.800-2.700l4.800-.3 2.700-3.700 1.900-1.200 1 .6 .9 3-1 .7-1.200-1-1 2.600-.2 6.600h-1.100l-.3-4.300-4.600 .3-.5 4h-1.100l-.1-4-1.300 .5-.8 3.500z" fill="#ddd6cc" stroke="#7a6a5a" stroke-width=".35"/>
<path d="M112.600 440.800l.8 2.600M114.600 440.600l.5 2.600M116.500 440.300l.5 2.600M118.300 439l.8 2.400M119.800 437.200l1 2M121 435.800l.8 1.600" stroke="#5a4a3e" stroke-width=".5"/>
<path d="M127.400 447.800l.1-3c.1-1.200 .8-1.800 1.900-1.900l2.800-.2 1.500-1.700 1.200-.4 .7 .6 .4 1.600-.8 .4-.6-.5-.5 1.400-.1 3.700h-.9l-.2-2.500-2.600 .2-.3 2.300h-.9l-.1-2.300-.7 .3-.4 2z" fill="#ddd6cc" stroke="#7a6a5a" stroke-width=".3"/>
<path d="M129.600 443.200l.4 1.500M130.900 443.100l.3 1.500M132.200 442.900l.3 1.400M133.400 441.900l.5 1.200" stroke="#5a4a3e" stroke-width=".35"/></svg>
<svg style="left:144.400px;top:437px" width="10" height="9" viewBox="0 0 10 9"><rect x="1" y="2.200" width="1.300" height="4.400" fill="#222"/><rect x="3" y="1.800" width="3.800" height="2.200" fill="none" stroke="#222" stroke-width=".7"/><rect x="3" y="5" width="3.800" height="2.200" fill="none" stroke="#222" stroke-width=".7"/><rect x="7.600" y="1.400" width="1.200" height="6.200" fill="#222"/></svg>
<svg style="left:165.600px;top:436px" width="11" height="11" viewBox="0 0 24 24"><circle cx="12" cy="12" r="10.500" fill="#1b86d8"/><path d="M1.800 10C3 4.600 7.400 1.600 12 1.600c5.800 0 10.400 4 10.400 9.200 0 3.200-2.400 5-5 5-2.200 0-3.400-1-3.400-1.800 0-.6 .9-1 .9-2.400 0-2-2-3.800-4.900-3.800-3.200 0-6.400 2.400-8.200 2.200z" fill="#3fd0b8"/><path d="M8.600 12.600c-.6 3.800 2.200 7.800 7 8.200-5.200 2.200-10.800-1-11.600-6.200 1-1.800 2.600-2.600 4.600-2z" fill="#0b4fa0"/></svg>
<svg style="left:186px;top:436.400px" width="11" height="10" viewBox="0 0 11 10"><path d="M.8 2h3.400l.8 1h5.200v5.600h-9.400z" fill="#e9b93a"/><rect x=".8" y="3.800" width="9.400" height="4.800" fill="#f6d667"/><rect x="3.400" y="5.800" width="4.200" height="2.800" fill="#3a8ad8"/><rect x="2.200" y="5" width="6.600" height="1" fill="#c99a2a"/></svg>
<svg style="left:206.600px;top:436px" width="11" height="11" viewBox="0 0 11 11"><path d="M3.600 2.600v-1.200h3.800v1.200" fill="none" stroke="#1a3a5c" stroke-width=".7"/><rect x="1" y="2.600" width="9" height="7.400" fill="#153e6a"/><rect x="3.300" y="4.300" width="1.900" height="1.900" fill="#f25022"/><rect x="5.700" y="4.300" width="1.900" height="1.900" fill="#7fba00"/><rect x="3.300" y="6.700" width="1.900" height="1.900" fill="#00a4ef"/><rect x="5.700" y="6.700" width="1.900" height="1.900" fill="#ffb900"/></svg>
<svg style="left:226.800px;top:436.600px" width="11" height="10" viewBox="0 0 11 10"><path d="M.8 3.400l4.700-3 4.700 3v5.800h-9.400z" fill="#1467b8"/><path d="M1.600 2.600h7.800v4h-7.800z" fill="#e8f3fc"/><path d="M.8 3.600l4.700 3.200 4.700-3.200v5.600h-9.400z" fill="#2a8ae0"/><path d="M.8 9.200l4.700-3.600 4.700 3.600z" fill="#1b76cc"/></svg>
<div class="a" style="left:243px;top:433.200px;width:20.200px;height:16.900px;background:#f2f7fc"></div>
<div class="a" style="left:243px;top:448.800px;width:20.200px;height:1.300px;background:#2f7fd0"></div>
<svg style="left:247.600px;top:435.800px" width="11" height="11" viewBox="0 0 14 14"><rect x="4" y="1" width="8" height="6.500" fill="#3d4f98"/><rect x="5" y="2" width="6" height="4.500" fill="#8fb2e8"/><rect x="1.500" y="6.500" width="6" height="5" fill="#5a6a8c"/><rect x="5.500" y="8.500" width="7.500" height="3" fill="#c5cad6"/><rect x="1.500" y="11.500" width="11.500" height="1.200" fill="#3f4a5e"/></svg>
<svg style="left:633px;top:436.400px" width="13" height="11" viewBox="0 0 13 11"><path d="M7.200 .8a4.200 4.200 0 1 0 3.800 6 3.600 3.600 0 0 1-3.800-6z" fill="#f2b632"/><path d="M2.600 9.800a2 2 0 0 1 .2-4 2.600 2.600 0 0 1 4.800-.4 2.200 2.200 0 0 1 .6 4.400z" fill="#f4d9a0"/></svg>
<div class="t" style="left:648px;top:438.600px;font-size:5.400px;color:#222">13°C&nbsp; Smoke</div>
<svg style="left:690.400px;top:439.600px" width="6" height="4" viewBox="0 0 6 4"><path d="M.6 3.200l2.300-2.300 2.300 2.300" fill="none" stroke="#222" stroke-width=".7"/></svg>
<svg style="left:700px;top:438px" width="48" height="8" viewBox="700 438 48 8" fill="none" stroke="#222" stroke-width=".6"><rect x="701.400" y="439.800" width="3.800" height="3"/><path d="M702 439.800v-.9h2.600v.9M701.400 444.600h3.800"/><path d="M711.200 444.200a1.600 1.600 0 0 1 .2-3.200 2.300 2.300 0 0 1 4.400 .2 1.500 1.500 0 0 1 .2 3z"/><rect x="721.200" y="440.200" width="5" height="3.200"/><rect x="721.500" y="440.500" width="2.800" height="2.600" fill="#222"/><path d="M726.700 441.200v1.200"/><path d="M731.800 444.400a3.400 3.400 0 0 1 4.400-4.400M733 444.400a2 2 0 0 1 3-2.600"/><circle cx="735.600" cy="443.800" r=".5" fill="#222"/><path d="M740.400 441h1.200l1.600-1.400v4.800l-1.600-1.400h-1.200z"/><path d="M744.400 440.600c.8 .8 .8 2 0 2.800M745.500 439.800c1.300 1.300 1.300 3.100 0 4.400"/></svg>
<div class="t" style="left:743px;top:433.600px;width:40px;text-align:center;font-size:4.900px;color:#222">12:45 am</div>
<div class="t" style="left:743px;top:440.800px;width:40px;text-align:center;font-size:4.900px;color:#222">21/01/2024</div>
<svg style="left:782.600px;top:437.400px" width="8" height="8" viewBox="0 0 8 8"><path d="M.8 .8h6.200v4.800h-3l-1.600 1.500v-1.500h-1.600z" fill="none" stroke="#222" stroke-width=".65"/></svg>
</body></html>
